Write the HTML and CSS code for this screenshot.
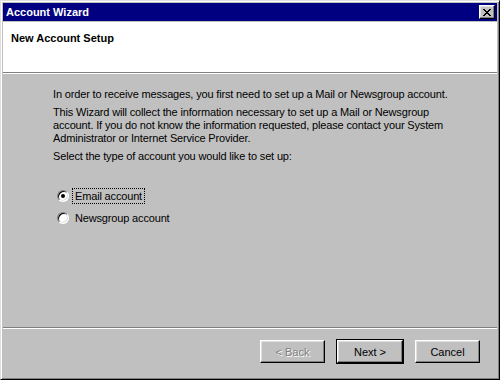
FILE: index.html
```html
<!DOCTYPE html>
<html lang="en">
<head>
    <meta charset="UTF-8">
    <title>Account Wizard</title>
    <link rel="stylesheet" href="styles.css">
</head>
<body>

    <div class="window">
        <div class="title-bar">
            <span class="title-text">Account Wizard</span>
            <button class="close-btn" aria-label="Close">
                <svg width="8" height="7" viewBox="0 0 8 7">
                    <path d="M0 0h2v1h1v1h2V1h1V0h2v1H7v1H6v1H5v1h1v1h1v1h1v1H6V6H5V5H3v1H2v1H0V6h1V5h1V4h1V3H2V2H1V1H0z" fill="#000"/>
                </svg>
            </button>
        </div>

        <div class="header">New Account Setup</div>

        <div class="content">
            <p>In order to receive messages, you first need to set up a Mail or Newsgroup account.</p>
            <p>This Wizard will collect the information necessary to set up a Mail or Newsgroup account. If you do not know the information requested, please contact your System Administrator or Internet Service Provider.</p>
            <p>Select the type of account you would like to set up:</p>

            <div class="choices">
                <label class="choice">
                    <span class="radio checked"></span>
                    <span class="choice-label focused">Email account</span>
                </label>
                <label class="choice">
                    <span class="radio"></span>
                    <span class="choice-label">Newsgroup account</span>
                </label>
            </div>
        </div>

        <!-- Barre du bas avec les boutons -->
        <div class="footer">
            <div class="buttons">
                <button class="btn disabled">&lt; Back</button>
                <button class="btn default">Next &gt;</button>
                <button class="btn">Cancel</button>
            </div>
        </div>
    </div>

</body>
</html>
```

FILE: styles.css
```css
body {
    margin: 0;
    font-family: 'Liberation Sans', Arial, sans-serif;
    font-size: 11px;
    color: #000;
}

.window {
    box-sizing: border-box;
    width: 500px;
    height: 380px;
    background: #c0c0c0;
    border: 1px solid;
    border-color: #dfdfdf #000 #000 #dfdfdf;
    box-shadow: inset 1px 1px #fff, inset -1px -1px #808080;
    padding: 2px;
    display: flex;
    flex-direction: column;
}

.title-bar {
    height: 18px;
    background: #000080;
    display: flex;
    align-items: center;
    justify-content: space-between;
    padding: 0 2px 0 3px;
}

.title-text {
    color: #fff;
    font-weight: bold;
    font-size: 11px;
}

.close-btn {
    box-sizing: border-box;
    width: 16px;
    height: 14px;
    padding: 0;
    background: #c0c0c0;
    border: 1px solid;
    border-color: #fff #000 #000 #fff;
    box-shadow: inset -1px -1px #808080, inset 1px 1px #dfdfdf;
    display: flex;
    align-items: center;
    justify-content: center;
}

.close-btn svg {
    display: block;
    margin-left: -1px;
}

/* Bandeau blanc du haut */
.header {
    margin-top: 1px;
    height: 51px;
    background: #fff;
    border-bottom: 1px solid #808080;
    box-shadow: 0 1px #fff;
    font-weight: bold;
    padding: 10px 0 0 8px;
    box-sizing: border-box;
}

.content {
    flex: 1;
    padding: 15px 40px 0 50px;
    letter-spacing: -0.16px;
}

.content p {
    margin: 0 0 5px 0;
    line-height: 13px;
}

.choices {
    margin-top: 25px;
    display: flex;
    flex-direction: column;
    gap: 6px;
}

.choice {
    display: flex;
    align-items: center;
    gap: 3px;
    height: 16px;
    padding-left: 4px;
}

.radio {
    box-sizing: border-box;
    width: 12px;
    height: 12px;
    border-radius: 50%;
    border: 1px solid;
    border-color: #808080 #fff #fff #808080;
    background: #fff;
    box-shadow: inset 1px 1px #000, inset -1px -1px #dfdfdf;
    position: relative;
}

.radio.checked::after {
    content: "";
    position: absolute;
    left: 3px;
    top: 3px;
    width: 4px;
    height: 4px;
    border-radius: 50%;
    background: #000;
}

.choice-label {
    padding: 1px 2px;
    border: 1px dotted transparent;
}

.choice-label.focused {
    border-color: #000;
}

.footer {
    border-top: 1px solid #808080;
    box-shadow: inset 0 1px #fff;
    padding: 12px 17px 14px 0;
}

.buttons {
    display: flex;
    justify-content: flex-end;
    gap: 12px;
}

.btn {
    box-sizing: border-box;
    width: 65px;
    height: 23px;
    font-family: 'Liberation Sans', Arial, sans-serif;
    font-size: 11px;
    color: #000;
    background: #c0c0c0;
    border: 1px solid;
    border-color: #fff #000 #000 #fff;
    box-shadow: inset -1px -1px #808080, inset 1px 1px #dfdfdf;
    padding: 0;
}

.btn.default {
    width: 66px;
    outline: 1px solid #000;
    outline-offset: 0;
}

.btn.disabled {
    color: #808080;
    text-shadow: 1px 1px #fff;
}
```
